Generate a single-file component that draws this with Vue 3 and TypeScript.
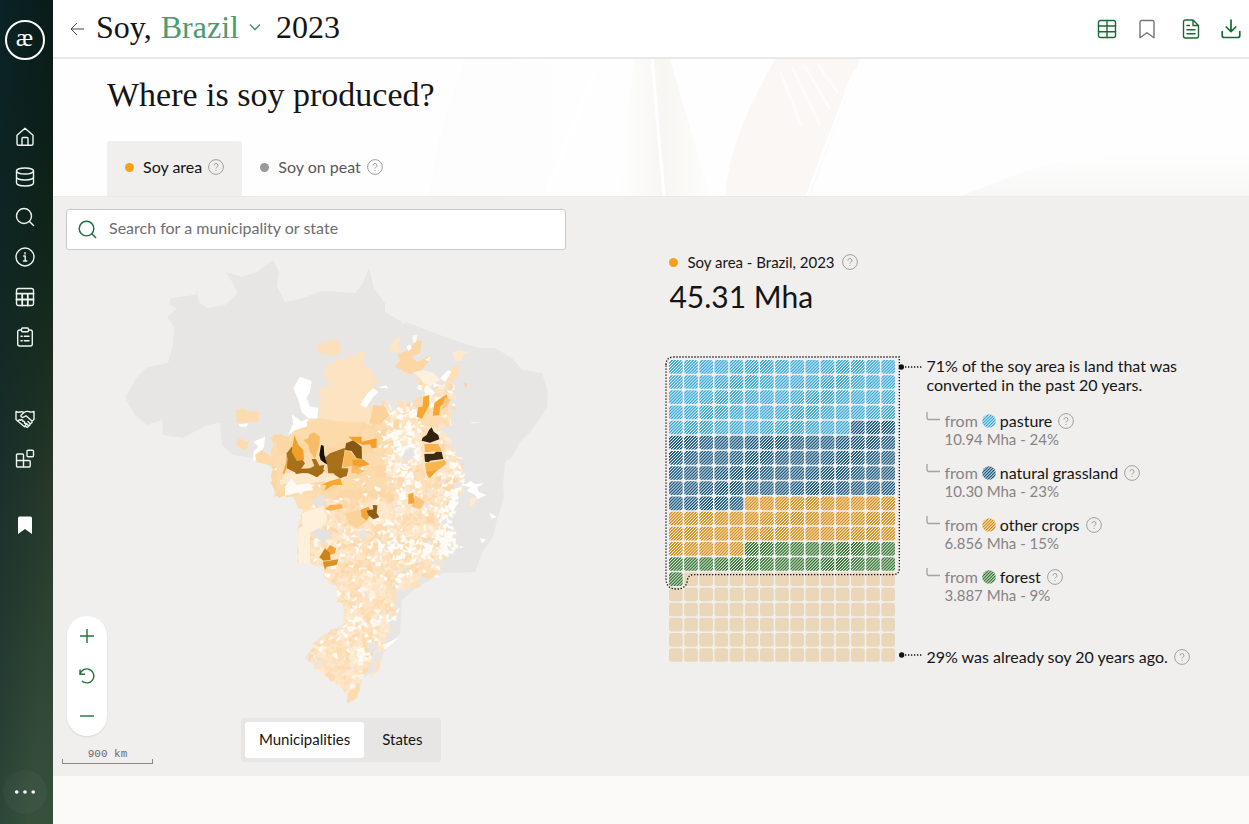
<script setup lang="ts">
import { ref } from 'vue'

type Point = [number, number]
interface Patch { points: string; fill: string }
interface Source { id: string; name: string; amount: string; color: string; squares: number }

const view = ref('Municipalities')
const tab = ref('Soy area')
const country = ref('Brazil')
const query = ref('')

const tabs = [
  { name: 'Soy area', color: '#f5a11c' },
  { name: 'Soy on peat', color: '#9b989a' },
]
const views = ['Municipalities', 'States']

const sources: Source[] = [
  { id: 'pasture', name: 'pasture', amount: '10.94 Mha - 24%', color: '#259fd2', squares: 72 },
  { id: 'grassland', name: 'natural grassland', amount: '10.30 Mha - 23%', color: '#054a73', squares: 68 },
  { id: 'crops', name: 'other crops', amount: '6.856 Mha - 15%', color: '#d48300', squares: 45 },
  { id: 'forest', name: 'forest', amount: '3.887 Mha - 9%', color: '#22691f', squares: 26 },
]

const COLUMNS = 15
const PITCH = 45.5
const squares = Array.from({ length: 300 }, (_, i) => {
  let left = i
  const source = sources.find((s) => {
    if (left < s.squares) return true
    left -= s.squares
    return false
  })
  return {
    x: 42 + (i % COLUMNS) * PITCH,
    y: 360 + Math.floor(i / COLUMNS) * PITCH,
    fill: source ? `url(#hatch-${source.id})` : '#ead7b9',
  }
})

const countryOutline =
  '170,298 195,295 197,291 199,303 208,308 225,305 238,293 232,282 226,272 242,277 257,272 273,260 279,272 277,287 285,302 303,298 323,291 355,293 362,285 369,268 374,288 385,303 385,312 402,322 403,324 406,322 445,337 463,343 480,348 495,348 512,358 522,370 542,373 548,392 547,408 530,432 520,442 512,457 505,462 503,485 504,497 497,520 493,537 482,553 475,572 443,573 417,587 402,600 400,633 385,650 377,670 363,678 355,700 347,703 347,690 320,670 305,658 320,637 345,623 343,603 337,600 338,587 323,577 325,567 310,563 298,563 298,527 303,510 293,497 275,495 272,480 272,468 255,458 233,455 222,445 220,423 207,425 183,438 163,435 162,420 147,425 135,415 125,398 137,377 147,367 168,363 173,345 174,327 167,317 177,308 170,305'

const soyRegion: Point[] = [
  [272, 468], [271, 435], [290, 435], [294, 425], [310, 419], [320, 418], [318, 388], [328, 387], [325, 365],
  [333, 362], [342, 357], [360, 352], [366, 358], [363, 370], [375, 373], [373, 392], [366, 405], [380, 410],
  [386, 398], [405, 402], [425, 398], [421, 384], [414, 374], [428, 378], [438, 384], [450, 380], [454, 392],
  [450, 410], [452, 422], [443, 430], [450, 440], [456, 455], [462, 468], [463, 480], [460, 497], [450, 510],
  [452, 530], [455, 548], [440, 560], [438, 575], [420, 578], [414, 585], [395, 590], [395, 610], [388, 622],
  [391, 632], [380, 640], [384, 648], [372, 658], [366, 672], [358, 682], [358, 694], [350, 701], [346, 690],
  [320, 672], [305, 658], [320, 637], [345, 623], [343, 603], [337, 600], [338, 587], [323, 577], [325, 567],
  [310, 563], [298, 563], [298, 527], [303, 510], [293, 497], [275, 495], [272, 480],
]

const inside = (x: number, y: number, shape: Point[]) => {
  let hit = false
  for (let i = 0, j = shape.length - 1; i < shape.length; j = i++) {
    const [xi, yi] = shape[i]
    const [xj, yj] = shape[j]
    if (yi > y !== yj > y && x < ((xj - xi) * (y - yi)) / (yj - yi) + xi) hit = !hit
  }
  return hit
}

const noise = (x: number, y: number, salt: number) => {
  const n = Math.sin(x * 127.1 + y * 311.7 + salt * 74.7) * 43758.5453
  return n - Math.floor(n)
}

const bump = (x: number, y: number, cx: number, cy: number, rx: number, ry: number) =>
  Math.exp(-(((x - cx) / rx) ** 2) - ((y - cy) / ry) ** 2)

// Municipal mesh: a jittered grid whose shared corners keep the cells tiled.
const STEP = 3
const corner = (c: number, r: number) => {
  const x = 266 + c * STEP + (noise(c, r, 1) - 0.5) * 4
  const y = 346 + r * STEP + (noise(c, r, 2) - 0.5) * 4
  return `${x.toFixed(1)},${y.toFixed(1)}`
}
const tones = ['#fff2e0', '#feead0', '#fee5c5', '#fde0ba', '#fddbaf', '#fcd6a4']
const mesh: Patch[] = []
for (let r = 0; r < 120; r++) {
  for (let c = 0; c < 68; c++) {
    const x = 267 + c * STEP
    const y = 347 + r * STEP
    const ragged = (noise(c, r, 6) - 0.5) * 7
    if (!inside(x + (x > 372 ? ragged : 0), y, soyRegion)) continue
    const pale =
      0.06 +
      0.5 * bump(x, y, 392, 545, 32, 12) +
      0.75 * bump(x, y, 450, 545, 16, 40) +
      0.7 * bump(x, y, 370, 622, 30, 6) +
      0.6 * bump(x, y, 405, 455, 14, 40) +
      0.6 * bump(x, y, 458, 480, 10, 40) +
      0.7 * bump(x, y, 300, 483, 14, 7) +
      0.5 * bump(x, y, 425, 395, 30, 18) +
      0.5 * bump(x, y, 365, 650, 12, 8)
    const fine = noise(c, r, 3)
    const coarse = noise(Math.floor(c / 4), Math.floor(r / 4), 4)
    let fill = tones[Math.min(5, Math.floor((fine * 0.5 + coarse * 0.5) * 6))]
    if (y < 425 && x < 380) fill = '#fde3c1'
    else if (y < 500 && x < 385) fill = coarse > 0.5 ? '#fcd7a4' : '#fcdbad'
    if (!(y < 470 && x < 378) && noise(c, r, 5) < pale) fill = fine > 0.88 ? '#e8e7e7' : '#fffcf7'
    mesh.push({ points: [corner(c, r), corner(c + 1, r), corner(c + 1, r + 1), corner(c, r + 1)].join(' '), fill })
  }
}

const west: Patch[] = [
  { points: '378,465 400,460 410,468 450,470 445,500 380,505', fill: '#fcdcae' },
  { points: '385,508 415,505 410,515 390,515', fill: '#ffffff' },
  { points: '385,550 415,560 415,580 400,585 380,570', fill: '#fcdcae' },
  { points: '550,400 570,365 605,378 600,410 590,430 600,455 625,458 622,490 595,490 575,470 565,435', fill: '#ffffff' },
  { points: '545,478 575,500 595,490 590,515 555,525 535,540 550,505', fill: '#ffffff' },
  { points: '622,270 650,262 680,252 690,270 695,285 655,300 622,292', fill: '#fde0bb' },
  { points: '430,590 445,575 430,560 465,545 462,575 445,610 430,618', fill: '#ffffff' },
  { points: '435,600 455,585 490,610 490,632 440,622', fill: '#fcd9a8' },
  { points: '590,500 630,490 690,500 760,500 740,550 640,580 600,560', fill: '#fcdaa9' },
  { points: '525,655 600,645 700,665 680,690 640,680 560,690 510,685', fill: '#fde9cc' },
  { points: '580,555 595,550 598,538 612,532 630,545 628,570 615,612 600,590 595,570', fill: '#f8bc66' },
  { points: '530,595 545,575 560,590 585,625 575,640 560,655 530,640', fill: '#a8701b' },
  { points: '518,655 535,600 530,640 522,658', fill: '#f2a83a' },
  { points: '553,540 565,570 580,585 582,615 560,618 545,590', fill: '#eea02a' },
  { points: '555,658 570,642 600,640 613,632 605,612 618,612 628,632 643,630 638,655 618,665 600,650', fill: '#a96f17' },
  { points: '628,600 633,570 641,572 643,600 657,630 645,625 632,615', fill: '#15110b' },
]

const center: Patch[] = [
  { points: '-15,608 0,595 45,578 42,600 35,640 55,640 48,660 32,670 15,655 -5,655 -8,630', fill: '#a8701b' },
  { points: '48,565 70,556 95,575 96,612 80,610 65,588 45,585', fill: '#875714' },
  { points: '55,545 95,545 95,560 140,550 140,578 125,580 120,568 100,570 70,558', fill: '#f3a02a' },
  { points: '45,588 62,590 80,612 98,615 118,628 85,640 103,650 65,655 65,632 38,638', fill: '#f7b95b' },
  { points: '68,615 98,613 118,628 92,635 68,630', fill: '#f2a02c' },
  { points: '-25,690 0,678 30,670 38,690', fill: '#f5a62c' },
  { points: '0,255 20,255 32,290 10,305 -10,285', fill: '#fde0bb' },
  { points: '80,290 100,290 95,320 132,355 120,375 90,370', fill: '#fde3c1' },
  { points: '175,285 195,250 212,245 205,270 215,290 195,293', fill: '#fde5c8' },
  { points: '200,300 235,285 262,255 275,258 270,295 245,305 262,322 300,300 305,310 275,345 240,358 195,335 212,315', fill: '#fcd6a3' },
  { points: '248,240 262,240 258,262 248,262', fill: '#fff8ef' },
  { points: '230,275 240,268 245,280 235,288', fill: '#ffffff' },
  { points: '285,315 302,302 298,318', fill: '#ffffff' },
  { points: '368,292 390,285 418,292 400,298 398,315 375,320', fill: '#fee9cf' },
  { points: '365,335 390,330 385,365 362,385 345,372', fill: '#fde0b8' },
  { points: '330,370 355,345 365,350 345,380', fill: '#ffffff' },
  { points: '250,352 280,345 312,355 330,375 300,390 280,385 268,365', fill: '#fff1de' },
  { points: '400,382 412,385 408,402', fill: '#fcd5a2' },
  { points: '90,450 112,415 130,400 145,412 130,425 108,458', fill: '#ffffff' },
  { points: '145,398 168,390 175,400', fill: '#ffffff' },
  { points: '420,500 452,502 430,506', fill: '#f7f6f5' },
  { points: '130,450 165,455 178,480 150,510 118,505', fill: '#fbd29a' },
  { points: '260,430 275,420 295,470 340,490 320,520 275,510', fill: '#fcdcb0' },
  { points: '280,425 298,420 298,450 275,492 260,485 264,457 278,455', fill: '#f7a62f' },
  { points: '325,435 350,418 353,435 330,455 328,480 308,482 313,445', fill: '#f5a42f' },
  { points: '345,425 362,435 350,455 335,462', fill: '#fbc883' },
  { points: '275,560 328,553 340,590 345,615 350,630 325,655 292,680 280,640', fill: '#fde6c8' },
  { points: '275,557 278,548 290,540 297,525 305,517 311,530 325,540 328,553 300,563', fill: '#33230c' },
  { points: '283,567 325,567 335,587 285,592', fill: '#f8b34a' },
  { points: '283,597 312,596 318,590 335,590 340,612 300,617 297,622 285,620', fill: '#3b2a10' },
  { points: '285,625 345,615 348,628 325,645 295,670 288,650', fill: '#f9b54c' },
  { points: '225,590 245,582 255,600 235,618 215,608', fill: '#e6e5e5' },
  { points: '170,430 195,435 205,455 190,470', fill: '#e8e7e6' },
]

const south: Patch[] = [
  { points: '190,80 240,70 255,100 230,122 205,115', fill: '#fddfb6' },
  { points: '165,50 185,25 200,45 240,40 250,60 200,68 165,78', fill: '#fffaf3' },
  { points: '245,90 280,75 285,105 255,110', fill: '#e4e3e3' },
  { points: '195,8 215,-4 285,0 262,22 235,10', fill: '#a36d17' },
  { points: '305,0 355,0 350,18 330,25 315,15', fill: '#a36d17' },
  { points: '365,0 405,0 385,14', fill: '#f8be6c' },
  { points: '283,62 290,42 330,25 335,45 310,45', fill: '#f7a938' },
  { points: '283,117 300,105 335,103 338,115 300,122', fill: '#f8b350' },
  { points: '345,130 385,120 410,155 380,175 355,160', fill: '#fbd39a' },
  { points: '392,120 415,110 425,125 410,152 395,140', fill: '#f3a535' },
  { points: '410,122 430,118 428,105 442,106 440,128 448,142 430,148 415,135', fill: '#8f5e14' },
  { points: '555,75 585,95 570,118 545,110', fill: '#fac77f' },
  { points: '535,72 550,68 553,100 535,102', fill: '#f2a437' },
  { points: '590,5 620,0 600,25', fill: '#f4a232' },
  { points: '215,130 280,108 292,150 270,180 240,185 240,280 205,280 205,175 218,170', fill: '#fff0dc' },
  { points: '242,190 265,175 308,185 300,200 280,220 262,205', fill: '#e3e2e1' },
  { points: '385,182 400,178 410,198 395,205', fill: '#e4e7e5' },
  { points: '290,240 300,225 318,235 315,250 298,255', fill: '#f2a337' },
  { points: '268,262 285,235 300,250 302,270 280,272', fill: '#c98416' },
  { points: '278,275 325,268 320,285 290,290 285,300', fill: '#db9223' },
  { points: '690,45 715,40 720,32 735,42 762,40 742,52 745,65 768,75 742,88 735,75 710,62 722,52', fill: '#ffffff' },
  { points: '720,85 742,82 735,100 720,112', fill: '#feeacf' },
  { points: '778,128 800,140 785,146', fill: '#ffffff' },
  { points: '748,205 768,208 757,220', fill: '#ffffff' },
  { points: '688,228 702,230 692,235', fill: '#ffffff' },
  { points: '655,110 680,105 668,128', fill: '#ffffff' },
  { points: '430,575 455,568 448,600 415,625 438,595', fill: '#fde3c4' },
  { points: '458,525 508,502 485,522 465,540', fill: '#ffffff' },
  { points: '410,520 435,515 445,545 420,550', fill: '#e5e6e5' },
  { points: '250,575 272,568 278,580 262,585', fill: '#e5e9e6' },
  { points: '350,690 358,665 375,655 382,640 392,642 380,685 362,690 355,702', fill: '#fcdcae' },
]
</script>

<template>
  <svg class="sprite" aria-hidden="true">
    <symbol id="help" viewBox="0 0 16 16">
      <circle cx="8" cy="8" r="7.4" fill="none" stroke="currentColor" />
      <path d="M6 6.500a2 2 0 1 1 2.600 1.900c-.5.2-.6.5-.6 1.100M8 11v1" fill="none" stroke="currentColor" />
    </symbol>
  </svg>
  <div class="app">
    <nav class="rail" aria-label="Main">
      <a class="logo" href="#" aria-label="Home page"><span>æ</span></a>
      <div class="group">
        <a href="#" aria-label="Home"><svg viewBox="0 0 20 20"><path d="M2 8.2 10 1.3l8 6.9v8.6a1.5 1.5 0 0 1-1.5 1.5h-13A1.5 1.5 0 0 1 2 16.8zM7 18v-6.5a1 1 0 0 1 1-1h4a1 1 0 0 1 1 1V18" /></svg></a>
        <a href="#" aria-label="Data"><svg viewBox="0 0 20 20"><ellipse cx="10" cy="4" rx="8.500" ry="3" /><path d="M1.500 4v12c0 1.700 3.800 3 8.500 3s8.500-1.300 8.500-3V4M1.500 10c0 1.700 3.800 3 8.500 3s8.500-1.300 8.500-3" /></svg></a>
        <a href="#" aria-label="Search"><svg viewBox="0 0 20 20"><circle cx="9" cy="9" r="7.5" /><path d="m14.5 14.5 4 4" /></svg></a>
        <a href="#" aria-label="About"><svg viewBox="0 0 20 20"><circle cx="10" cy="10" r="9" /><path d="M8.7 9h1.5v5M8.5 14h3.3M10 5.6v1.3" /></svg></a>
        <a href="#" aria-label="Tables"><svg viewBox="0 0 20 20"><rect x="1.500" y="1.500" width="17" height="17" rx="2" /><path d="M1.500 6.700h17M1.500 12.500h17M7.200 6.700v11.800M12.800 6.700v11.800" stroke-width="1.8" /></svg></a>
        <a href="#" aria-label="Reports"><svg viewBox="0 0 20 20"><path d="M6.5 3H4.7a2 2 0 0 0-2 2v12a2 2 0 0 0 2 2h10.6a2 2 0 0 0 2-2V5a2 2 0 0 0-2-2h-1.8" /><rect x="6.5" y="1" width="7" height="3.8" rx="1" /><path d="M6 9.2h1.2M9.3 9.2H14M6 13.7h1.2M9.3 13.7H14" /></svg></a>
      </div>
      <div class="group partners">
        <a href="#" aria-label="Partners"><svg viewBox="0 0 20 20"><path d="M1 2.5c2 1 4 .8 5.5.2L9 3.4M1 2.5v8l2.2 2M19 2.5c-2 1-3.500.8-5 .2-2-.7-3.500-.2-5 .8L6.200 6c-1 1.200.5 3 2.200 2.200L11 6.800l6 5.200M19 2.500v8l-2 1.500M3.200 12.500c0-1.500 1.600-2.300 2.500-1.200.8-1 2.500-.2 2.200 1 1.300-.3 2.200.8 1.600 2 1.200 0 1.700 1.200 1 2.200l-1 1.200zM10.500 17.200l1 .8c1.200.6 2.300-.5 1.800-1.500 1.400.2 2.300-1 1.700-2 1.400.2 2.500-1 2-2.500M11.500 14.500l1.800 2M13 12.500l2 2" /></svg></a>
        <a href="#" aria-label="Apps"><svg viewBox="0 0 20 20"><path d="M2.500 5h5a1 1 0 0 1 1 1v12H2.700a1.200 1.200 0 0 1-1.200-1.200V6a1 1 0 0 1 1-1zM1.500 11.500h12.700a1 1 0 0 1 1 1v4.300a1.200 1.200 0 0 1-1.200 1.200H8.500" /><rect x="12" y="1.200" width="6.500" height="6.500" rx="1" /></svg></a>
      </div>
      <div class="group saved">
        <a href="#" aria-label="Saved"><svg viewBox="0 0 20 20"><path d="M4.500 1.500h11a1.500 1.500 0 0 1 1.500 1.500v16l-7-5-7 5V3a1.500 1.500 0 0 1 1.500-1.500z" fill="#fff" stroke="none" /></svg></a>
      </div>
      <button class="more" type="button" aria-label="More"><svg viewBox="0 0 24 6"><g fill="#fff" stroke="none"><circle cx="3" cy="3" r="2" /><circle cx="12" cy="3" r="2" /><circle cx="21" cy="3" r="2" /></g></svg></button>
    </nav>

    <main class="page">
      <header class="topbar">
        <button class="back" type="button" aria-label="Back"><svg viewBox="0 0 14 14"><path d="M14 7H1M7 1 1 7l6 6" /></svg></button>
        <h1>
          <span>Soy,</span>
          <label class="country">
            <select v-model="country" aria-label="Country"><option>Brazil</option></select>
            <svg viewBox="0 0 12 8"><path d="m1 1.500 5 5 5-5" /></svg>
          </label>
          <span>2023</span>
        </h1>
        <div class="tools">
          <button type="button" aria-label="Table"><svg viewBox="0 0 20 20"><rect x="1.500" y="1.500" width="17" height="17" rx="2" /><path d="M1.500 7h17M1.500 12.700h17M10 1.500v17" /></svg></button>
          <button class="mark" type="button" aria-label="Bookmark"><svg viewBox="0 0 20 20"><path d="M4.500 1.500h11a1.500 1.500 0 0 1 1.500 1.500v15.700l-7-5-7 5V3a1.500 1.500 0 0 1 1.500-1.500z" /></svg></button>
          <button class="second" type="button" aria-label="Report"><svg viewBox="0 0 20 20"><path d="M12 1H4.500a2 2 0 0 0-2 2v14a2 2 0 0 0 2 2h11a2 2 0 0 0 2-2V6.500zM12 1v5.500h5.500M6 6.500h2.500M6 10.700h8M6 14.800h8" /></svg></button>
          <button type="button" aria-label="Download"><svg viewBox="0 0 20 20"><path d="M10 1v11.500M5.200 8l4.800 4.700L14.800 8M1.200 12.500v4a2 2 0 0 0 2 2h13.600a2 2 0 0 0 2-2v-4" stroke-width="1.700" /></svg></button>
        </div>
      </header>

      <section class="hero">
        <svg class="leaves" viewBox="0 0 849 137" preserveAspectRatio="none" aria-hidden="true">
          <defs>
            <linearGradient id="fade" x1="0" x2="0" y1="0" y2="1"><stop offset="0" stop-color="#f8f8f4" stop-opacity="0" /><stop offset="1" stop-color="#f7f7f4" /></linearGradient>
            <linearGradient id="stalk"><stop offset="0" stop-color="#fff" /><stop offset=".5" stop-color="#f7f6f2" /><stop offset="1" stop-color="#fdfdfc" /></linearGradient>
            <linearGradient id="husk"><stop offset="0" stop-color="#fdfcfc" /><stop offset="1" stop-color="#fffeff" /></linearGradient>
          </defs>
          <path d="M65 0h125l-45 137H30C34 90 45 60 48 50z" fill="url(#husk)" />
          <path d="M235 0h35l40 137h-95z" fill="url(#stalk)" />
          <path d="M375 0h85l-50 137h-85C330 85 348 50 375 0z" fill="#faf7f4" />
          <path d="M252 0 264 137M196 10 147 133M455 10 407 137" fill="none" stroke="#fff" stroke-width="3" />
          <path d="M380 12 402 68M392 8 420 66M404 6 430 50M418 6 438 34" fill="none" stroke="#fdfcfa" stroke-width="3" />
          <path d="M560 137C620 115 650 98 700 100l20-8 129 4v41z" fill="url(#fade)" />
        </svg>
        <h2>Where is soy produced?</h2>
        <div class="tabs" role="tablist">
          <button v-for="t in tabs" :key="t.name" type="button" role="tab" :class="{ active: t.name === tab }" :aria-selected="t.name === tab" @click="tab = t.name">
            <svg class="dot" viewBox="0 0 10 10"><circle cx="5" cy="5" r="5" :fill="t.color" /></svg>
            <span>{{ t.name }}</span>
            <svg class="help"><use href="#help" /></svg>
          </button>
        </div>
      </section>

      <section class="content">
        <div class="map-pane">
          <label class="search">
            <svg viewBox="0 0 20 20"><circle cx="9" cy="9" r="7.700" /><path d="m14.500 14.500 4.500 4.500" /></svg>
            <input v-model="query" type="text" placeholder="Search for a municipality or state" aria-label="Search for a municipality or state" />
          </label>
          <svg class="map" viewBox="0 0 1350 1380" role="img" aria-label="Soy area by municipality">
            <g transform="scale(3) translate(-116 -254)">
              <polygon :points="countryOutline" fill="#e7e6e4" />
              <polygon v-for="(p, i) in mesh" :key="i" :points="p.points" :fill="p.fill" :stroke="p.fill" stroke-width=".5" />
            </g>
            <g transform="translate(-18 3)"><polygon v-for="(p, i) in west" :key="i" :points="p.points" :fill="p.fill" /></g>
            <g transform="translate(642 3)"><polygon v-for="(p, i) in center" :key="i" :points="p.points" :fill="p.fill" /></g>
            <g transform="translate(342 648)"><polygon v-for="(p, i) in south" :key="i" :points="p.points" :fill="p.fill" /></g>
          </svg>
          <div class="switch">
            <button v-for="v in views" :key="v" type="button" :class="{ active: v === view }" :aria-pressed="v === view" @click="view = v">{{ v }}</button>
          </div>
          <div class="map-controls">
            <div class="zoom">
              <button type="button" aria-label="Zoom in"><svg viewBox="0 0 16 16"><path d="M1 8h14M8 1v14" /></svg></button>
              <button type="button" aria-label="Reset view"><svg viewBox="0 0 16 16"><path d="M1 1.500v4.800h5M1 6.300A7 7 0 1 1 3 13" /></svg></button>
              <button type="button" aria-label="Zoom out"><svg viewBox="0 0 16 16"><path d="M1 8h14" /></svg></button>
            </div>
            <div class="scale">900 km</div>
          </div>
        </div>

        <div class="stats">
          <div class="label">
            <svg class="dot" viewBox="0 0 10 10"><circle cx="5" cy="5" r="5" fill="#f5a11c" /></svg>
            <span>Soy area - Brazil, 2023</span>
            <svg class="help"><use href="#help" /></svg>
          </div>
          <p class="total">45.31 Mha</p>
          <div class="breakdown">
            <svg class="waffle" viewBox="24 339 780 942" role="img" aria-label="Origin of the soy area">
              <defs>
                <pattern v-for="s in sources" :id="`hatch-${s.id}`" :key="s.id" width="6.434" height="6.434" patternUnits="userSpaceOnUse" patternTransform="rotate(45)">
                  <rect width="6.434" height="6.434" fill="#fdfdfc" />
                  <rect width="3.800" height="6.434" :fill="s.color" />
                </pattern>
              </defs>
              <rect v-for="(q, i) in squares" :key="i" :x="q.x" :y="q.y" width="41" height="41" rx="8" :fill="q.fill" />
              <path class="dotted" d="M33 375Q33 351 57 351H733V985Q733 1004 714 1004H115Q99 1004 97 1022Q93 1047 65 1047Q33 1047 33 1015Z" />
              <path class="dotted" d="M750 381H804M750 1245H804" />
              <circle cx="739" cy="381" r="8" /><circle cx="740" cy="1245" r="8" />
            </svg>
            <div class="notes">
              <p class="lead">71% of the soy area is land that was converted in the past 20 years.</p>
              <ul>
                <li v-for="s in sources" :key="s.id">
                  <svg class="branch" viewBox="0 0 14 10"><path d="M1 0v5.500a2 2 0 0 0 2 2h11" /></svg>
                  <div>
                    <div class="from">
                      <span>from</span>
                      <svg class="swatch" viewBox="0 0 42 42"><circle cx="21" cy="21" r="20.500" :fill="`url(#hatch-${s.id})`" /></svg>
                      <b>{{ s.name }}</b>
                      <svg class="help"><use href="#help" /></svg>
                    </div>
                    <div class="amount">{{ s.amount }}</div>
                  </div>
                </li>
              </ul>
              <p class="rest"><span>29% was already soy 20 years ago.</span><svg class="help"><use href="#help" /></svg></p>
            </div>
          </div>
        </div>
      </section>
    </main>
  </div>
</template>

<style>
body { margin: 0; background: #fbfaf8; }
</style>

<style scoped>
* { box-sizing: border-box; }
.app { display: flex; min-height: 100vh; font: 15px/20px Lato, "Liberation Sans", sans-serif; font-variant-ligatures: none; color: #151515; }
button { border: 0; padding: 0; background: none; font: inherit; font-variant-ligatures: none; color: inherit; cursor: pointer; }
svg { display: block; fill: none; stroke: none; flex: none; }
h1, h2, p, ul { margin: 0; padding: 0; font-weight: 400; }
.sprite { position: absolute; width: 0; height: 0; }
.help { width: 16px; height: 16px; color: #a09fa0; }
.dot { width: 9px; height: 9px; }

.rail { width: 53px; flex: none; display: flex; flex-direction: column; align-items: center; padding: 20px 4px 10px 0; background: linear-gradient(95deg, rgba(12, 38, 45, .8), rgba(12, 38, 45, 0) 80%), linear-gradient(#06150a, #122413 30%, #283a2a 60%, #36503c); }
.logo { width: 40px; height: 40px; border: 2px solid #fff; border-radius: 50%; display: flex; justify-content: center; color: #fff; font: 26px/32px "Liberation Serif", serif; text-decoration: none; }
.group { display: flex; flex-direction: column; margin-top: 57px; }
.group a { width: 40px; height: 40px; display: grid; place-items: center; }
.group svg { width: 20px; height: 20px; stroke: #eef5f0; stroke-width: 1.4; stroke-linecap: round; stroke-linejoin: round; }
.partners { margin-top: 42px; }
.saved { margin-top: 26px; }
.more { margin-top: auto; width: 44px; height: 44px; border-radius: 50%; background: rgba(255, 255, 255, .03); display: grid; place-items: center; }
.more svg { width: 22px; height: 6px; }

.page { flex: 1; min-width: 0; }
.topbar { height: 59px; display: flex; align-items: center; background: #fff; border-bottom: 2px solid #e9e9ea; padding-left: 17px; }
.back svg { width: 14px; height: 14px; stroke: #444; }
h1 { display: flex; align-items: center; margin-left: 12px; padding-bottom: 3px; font: 32px/40px "Liberation Serif", serif; }
.country { display: flex; align-items: center; gap: 10px; margin: 0 15px 0 9px; }
.country select { appearance: none; border: 0; padding: 0; background: none; font: inherit; color: #4c9a70; field-sizing: content; }
.country svg { width: 12px; height: 8px; stroke: #4c9a70; stroke-width: 1.6; }
.tools { margin-left: auto; display: flex; gap: 4px; }
.tools button { width: 36px; height: 40px; display: grid; place-items: center; }
.tools svg { width: 20px; height: 20px; stroke: #166b34; stroke-width: 1.4; stroke-linejoin: round; stroke-linecap: round; }
.tools .mark svg { stroke: #77747a; }
.tools .second { margin-left: 4px; }

.hero { position: relative; height: 137px; display: flex; flex-direction: column; padding: 14px 54px 0; background: #fffeff; overflow: hidden; }
.leaves { position: absolute; right: 0; top: 0; width: 71%; height: 100%; }
h2 { position: relative; font: 34px/44px "Liberation Serif", serif; }
.tabs { position: relative; margin-top: auto; display: flex; }
.tabs button { height: 55px; padding: 0 18px 3px; display: flex; align-items: center; gap: 9px; border-radius: 3px 3px 0 0; font-size: 16px; color: #59575b; }
.tabs button.active { background: #f0efed; color: #111; }
.tabs .help { margin-left: -3px; }

.content { display: grid; grid-template-columns: 482fr 518fr; background: #f0efed; border-top: 1px solid #eaeae8; }
.map-pane { position: relative; display: flex; flex-direction: column; align-items: center; padding: 12px 14px 14px 13px; }
.search { align-self: flex-start; width: 91%; height: 41px; display: flex; align-items: center; gap: 12px; padding: 0 12px 0 11px; background: #fff; border: 1px solid #c9c8c7; border-radius: 3px; }
.search svg { width: 19px; height: 19px; stroke: #1e6e3c; stroke-width: 1.5; }
.search input { flex: 1; min-width: 0; border: 0; outline: 0; padding: 0 0 3px; background: none; font: inherit; font-size: 16px; }
.search input::placeholder { color: #6f6d70; opacity: 1; }
.map { width: 450px; max-width: 100%; margin: 4px 0; }
.switch { display: flex; padding: 4px; background: #e7e6e5; border-radius: 3px; }
.switch button { height: 36px; padding: 0 14px 2px; border-radius: 3px; }
.switch button:last-child { padding: 0 14px 2px 18px; }
.switch button.active { background: #fff; }
.map-controls { position: absolute; left: 9px; bottom: 12px; }
.zoom { width: 40px; margin-left: 5px; display: flex; flex-direction: column; background: #fff; border-radius: 20px; box-shadow: 0 1px 2px rgba(0, 0, 0, .1); }
.zoom button { height: 40px; display: grid; place-items: center; }
.zoom svg { width: 16px; height: 16px; stroke: #1f7438; stroke-width: 1.4; }
.scale { position: relative; width: 91px; margin-top: 12px; padding-bottom: 3px; text-align: center; font: 11px/12px "Liberation Mono", monospace; color: #6d6b6d; border-bottom: 1px solid #8b898a; }
.scale::before, .scale::after { content: ""; position: absolute; bottom: 0; width: 1px; height: 4px; background: #8b898a; }
.scale::before { left: 0; }
.scale::after { right: 0; }

.stats { padding: 55px 0 20px 34px; }
.label { display: flex; align-items: center; gap: 9px; padding-left: 6px; }
.label .help { margin-left: -2px; }
.total { margin: 8px 0 0 6px; font-size: 30px; line-height: 32px; }
.breakdown { display: flex; margin-top: 41px; }
.waffle { width: 260px; height: 314px; }
.waffle circle { fill: #111; }
.dotted { stroke: #111; stroke-width: 4; stroke-dasharray: 4 5; }
.notes { flex: 1; min-width: 0; display: flex; flex-direction: column; padding: 3px 0 0 3px; }
.lead { max-width: 264px; font-size: 16px; line-height: 19px; }
ul { list-style: none; margin-top: 17px; display: grid; gap: 14px; }
li { display: flex; gap: 4px; color: #868486; line-height: 19px; }
.branch { width: 14px; height: 10px; margin-top: 1px; stroke: #a3a1a2; stroke-width: 1.3; }
.from { display: flex; align-items: center; gap: 4px; font-size: 16px; }
.from b { font-weight: 400; color: #151515; }
.from .help { margin-left: 2px; }
.swatch { width: 14px; height: 14px; }
.rest { margin-top: auto; display: flex; align-items: center; gap: 6px; font-size: 16px; }
</style>
